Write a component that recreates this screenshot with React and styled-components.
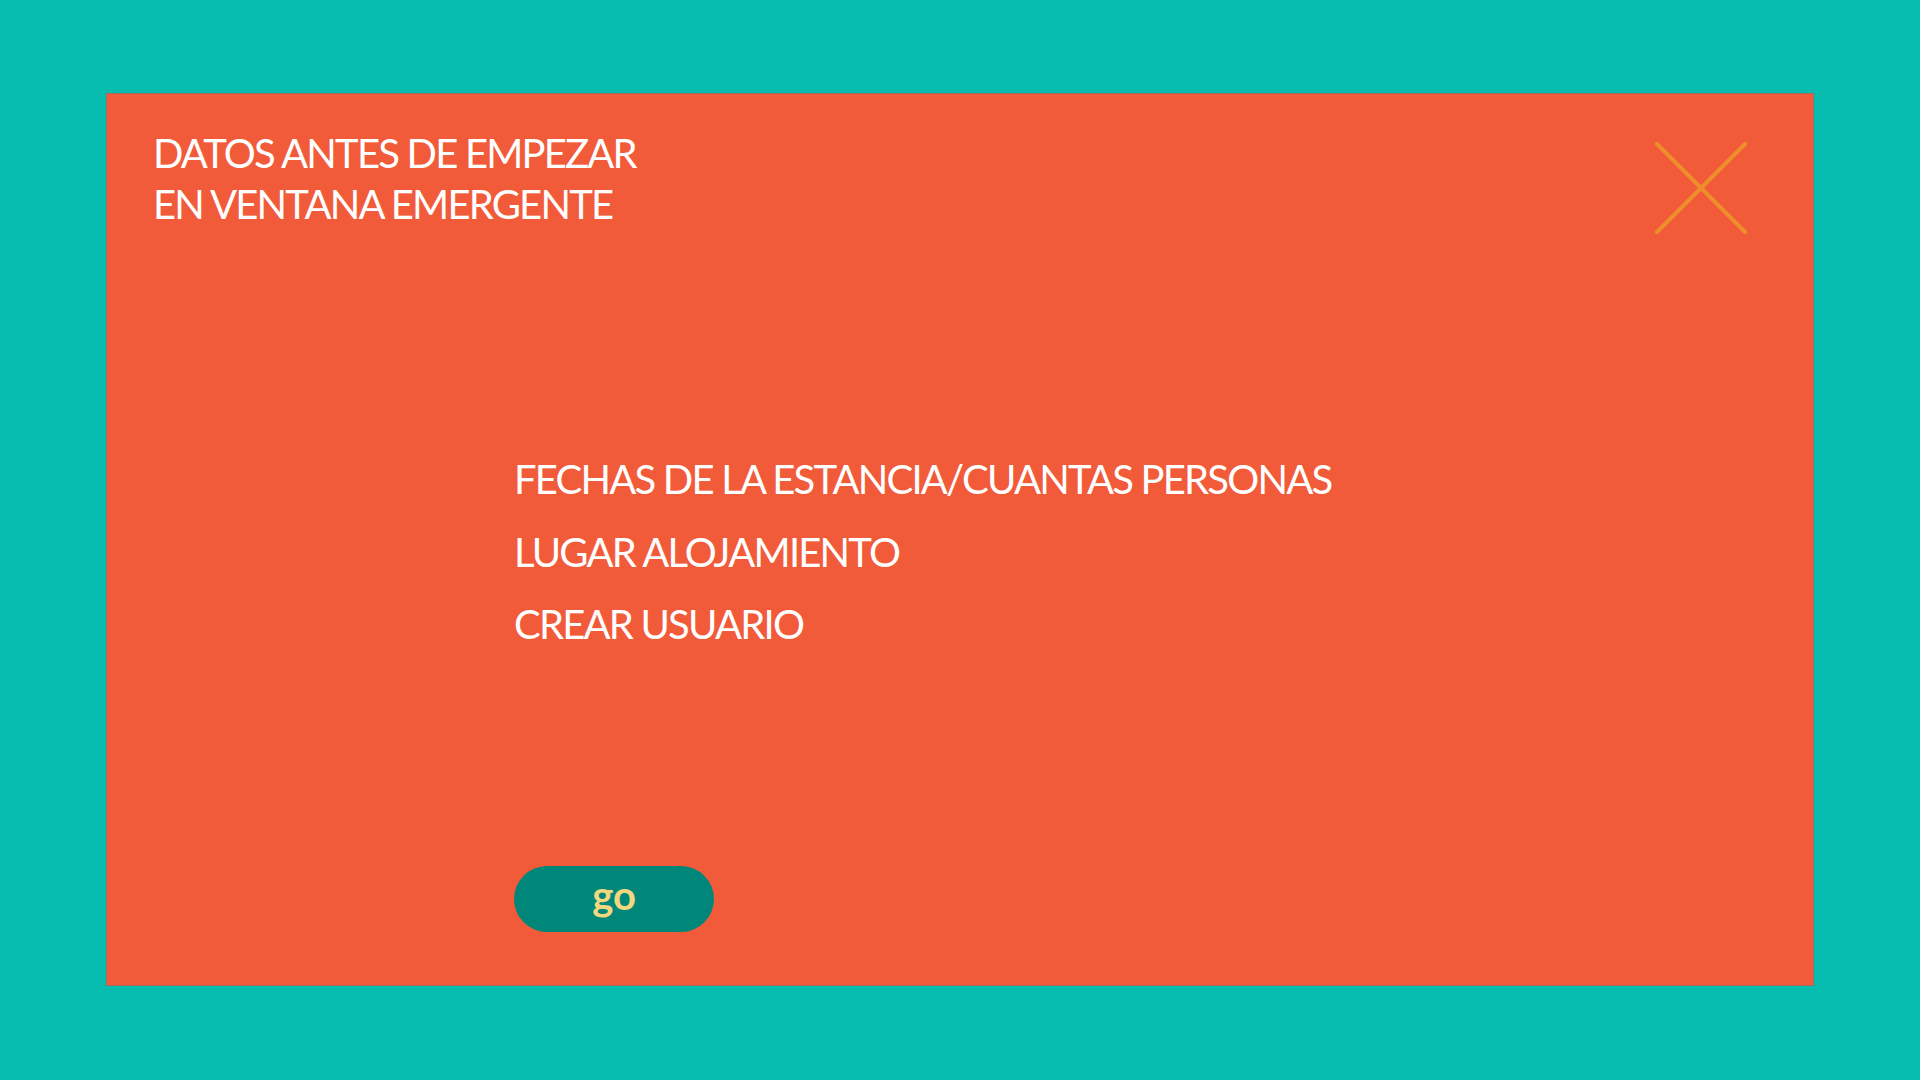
import React from "react";
import styled, { createGlobalStyle } from "styled-components";

const GlobalStyle = createGlobalStyle`
  html, body {
    margin: 0;
    padding: 0;
    background: #06bcaf;
  }
  body {
    width: 1920px;
    height: 1080px;
    overflow: hidden;
    font-family: Lato, "Open Sans", sans-serif;
  }
`;

const Page = styled.div`
  padding: 93px 0 0 106px;
`;

const Modal = styled.section`
  box-sizing: border-box;
  width: 1708px;
  height: 893px;
  background: #f25b3a;
  border: 1px solid #a4695a;
  padding: 34px 66px 0 46px;
  display: flex;
  flex-direction: column;
`;

const Header = styled.header`
  display: flex;
  justify-content: space-between;
  align-items: flex-start;
`;

const Title = styled.h1`
  margin: 0;
  font-size: 40px;
  line-height: 51px;
  letter-spacing: -1.8px;
  font-weight: 400;
  color: #ffffff;
`;

const CloseButton = styled.button`
  margin-top: 14px;
  padding: 0;
  border: none;
  background: none;
  width: 92px;
  height: 92px;
  cursor: pointer;
`;

const Content = styled.div`
  padding-left: 361px;
  display: flex;
  flex-direction: column;
  align-items: flex-start;
`;

const Steps = styled.ul`
  list-style: none;
  margin: 209px 0 0;
  padding: 0;
`;

const Step = styled.li`
  font-size: 40px;
  line-height: 72.5px;
  letter-spacing: -1.8px;
  color: #ffffff;
`;

const GoButton = styled.button`
  margin-top: 205px;
  width: 200px;
  height: 66px;
  border: none;
  border-radius: 33px;
  background: #00877a;
  color: #f3d77f;
  font-family: Lato, "Open Sans", sans-serif;
  font-weight: 700;
  font-size: 40px;
  line-height: 1;
  padding: 0 0 8px;
  cursor: pointer;
`;

const steps = [
  "FECHAS DE LA ESTANCIA/CUANTAS PERSONAS",
  "LUGAR ALOJAMIENTO",
  "CREAR USUARIO",
];

export default function App() {
  return (
    <>
      <GlobalStyle />
      <Page>
        <Modal>
          <Header>
            <Title>
              DATOS ANTES DE EMPEZAR
              <br />
              EN VENTANA EMERGENTE
            </Title>
            <CloseButton aria-label="Cerrar">
              <svg width="92" height="92" viewBox="0 0 92 92">
                <path
                  d="M2 2 L90 90 M90 2 L2 90"
                  stroke="#ef8f2c"
                  strokeWidth="4"
                  strokeLinecap="round"
                  fill="none"
                />
              </svg>
            </CloseButton>
          </Header>
          <Content>
            <Steps>
              {steps.map((s) => (
                <Step key={s}>{s}</Step>
              ))}
            </Steps>
            <GoButton>go</GoButton>
          </Content>
        </Modal>
      </Page>
    </>
  );
}
